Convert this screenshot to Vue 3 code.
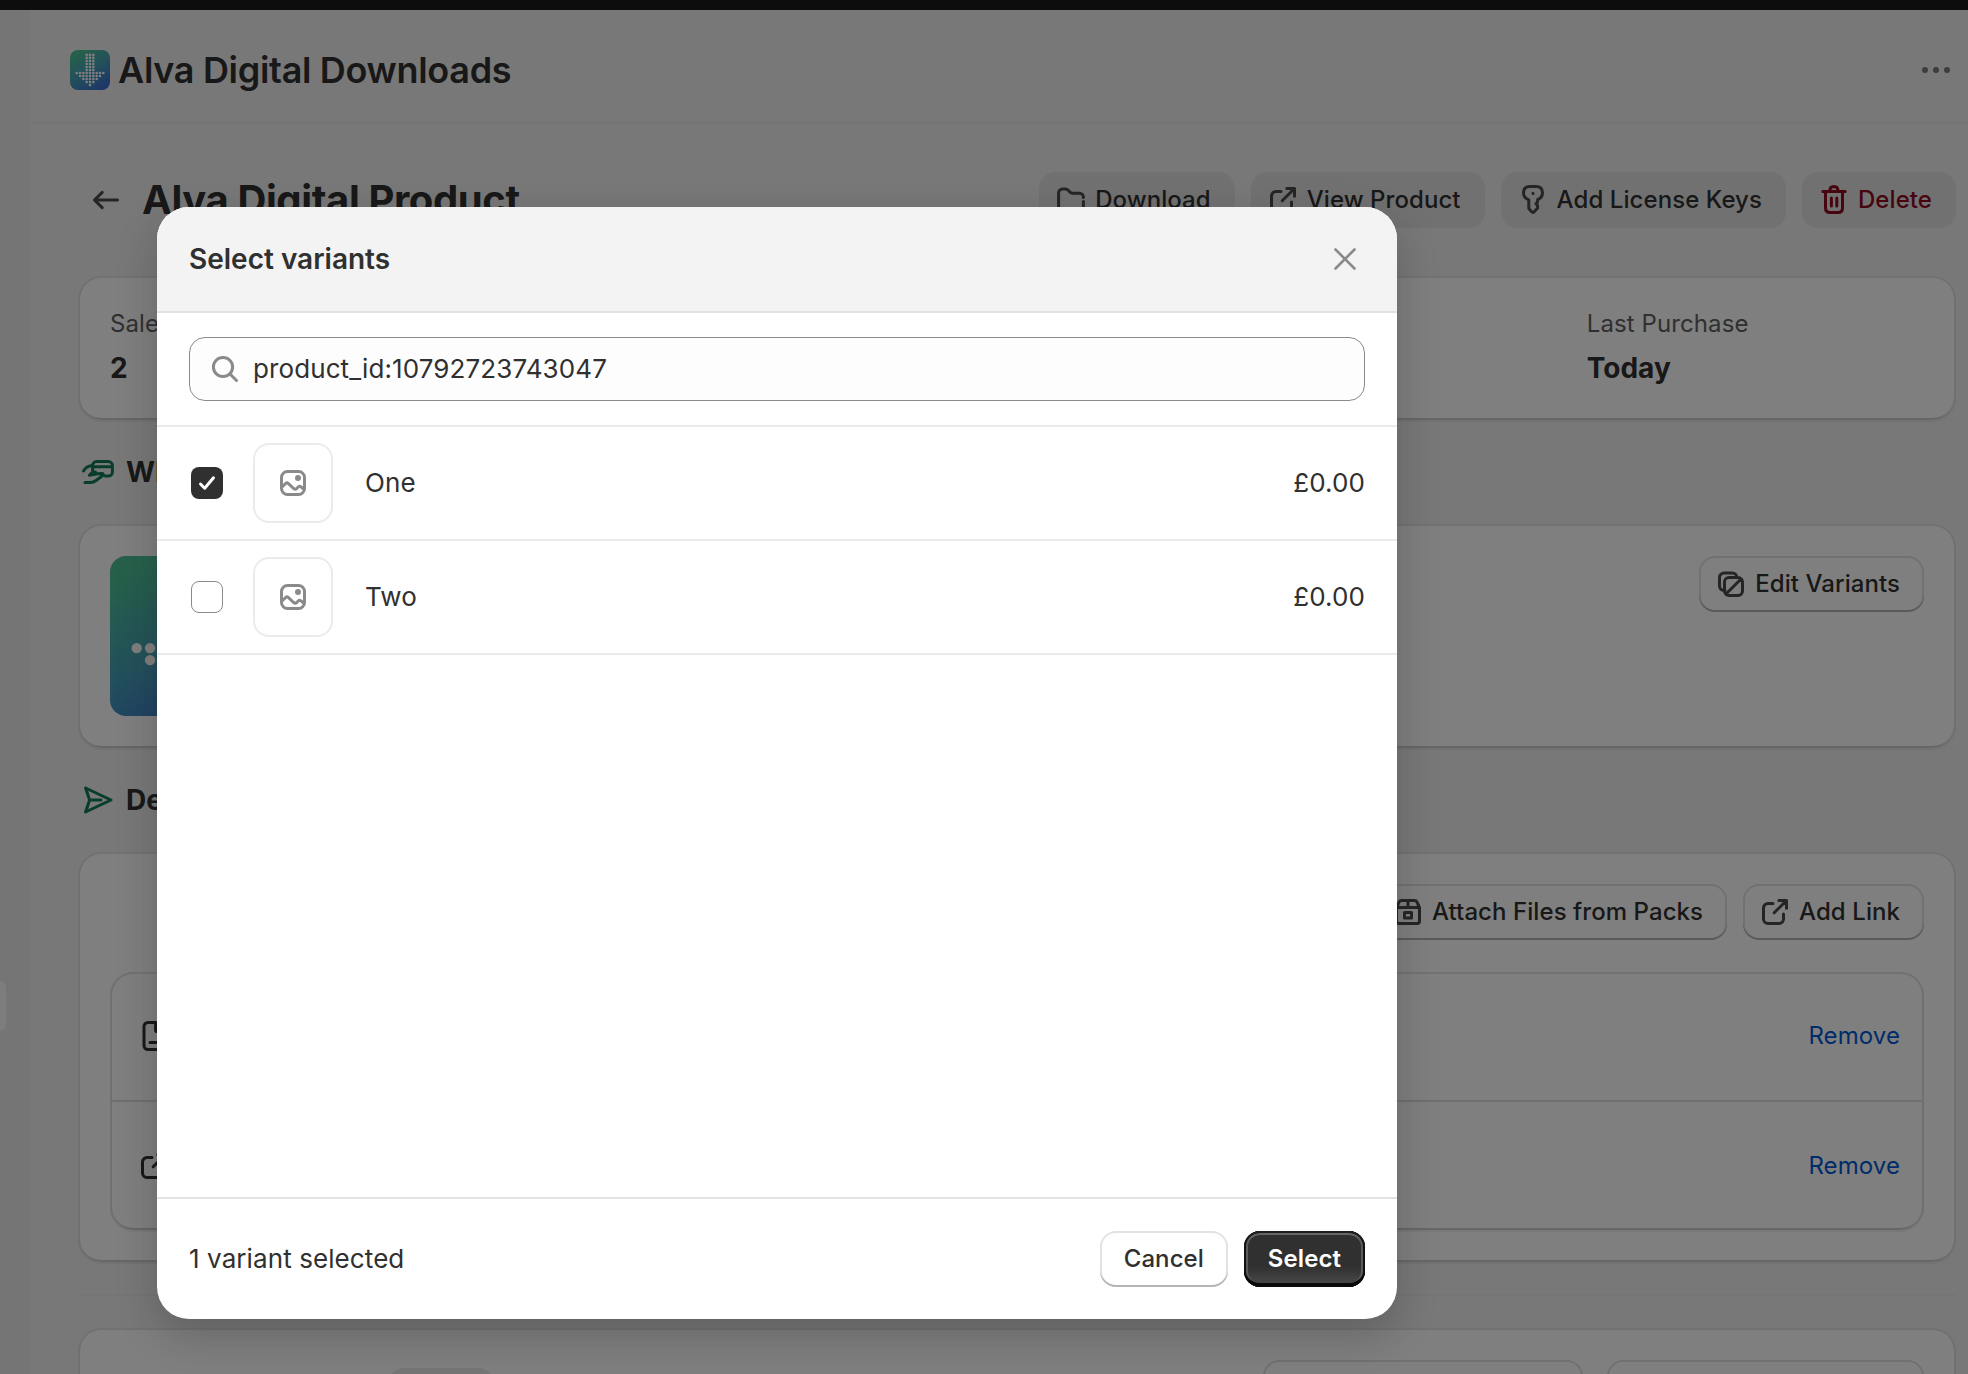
<template>
  <div class="app">
    <div class="topbar"></div>
    <div class="frame">
      <aside class="sidebar">
        <div class="nav-item"></div>
      </aside>
      <main class="main">
        <header class="app-header">
          <svg class="app-logo" viewBox="0 0 40 40">
            <defs>
              <linearGradient id="logoFill" x1="0.2" y1="0" x2="0.8" y2="1">
                <stop offset="0.05" stop-color="#4cc096" />
                <stop offset="0.5" stop-color="#46a0b8" />
                <stop offset="1" stop-color="#3a6ad0" />
              </linearGradient>
            </defs>
            <rect width="40" height="40" rx="8" fill="url(#logoFill)" />
            <circle v-for="(d, i) in dots" :key="i" :cx="d.x" :cy="d.y" r="1.3" fill="#fff" />
          </svg>
          <h1>Alva Digital Downloads</h1>
          <svg class="more" viewBox="0 0 28 6">
            <circle cx="3" cy="3" r="3" />
            <circle cx="14" cy="3" r="3" />
            <circle cx="25" cy="3" r="3" />
          </svg>
        </header>

        <div class="page">
          <div class="page-header">
            <svg class="icon back" viewBox="0 0 20 20"><path :d="icons.back" /></svg>
            <h2>Alva Digital Product</h2>
            <div class="page-actions">
              <button v-for="a in actions" :key="a.label" class="btn flat" :class="{ critical: a.critical }">
                <svg class="icon" viewBox="0 0 20 20"><path :d="a.icon" /></svg>
                <span>{{ a.label }}</span>
              </button>
            </div>
          </div>

          <section class="card stats">
            <div class="stat">
              <span>Sales</span>
              <strong>2</strong>
            </div>
            <div class="stat last">
              <span>Last Purchase</span>
              <strong>Today</strong>
            </div>
          </section>

          <h3 class="section-title">
            <svg class="icon" viewBox="0 0 20 20"><path :d="icons.payment" /></svg>
            What
          </h3>
          <section class="card product">
            <svg class="product-image" viewBox="0 0 40 40">
              <rect width="40" height="40" rx="4" fill="url(#logoFill)" />
              <circle v-for="(d, i) in dots" :key="i" :cx="d.x" :cy="d.y" r="1.3" fill="#fff" />
            </svg>
            <button class="btn">
              <svg class="icon" viewBox="0 0 20 20"><path :d="icons.variant" /></svg>
              <span>Edit Variants</span>
            </button>
          </section>

          <h3 class="section-title">
            <svg class="icon" viewBox="0 0 20 20"><path :d="icons.send" /></svg>
            Delivery
          </h3>
          <section class="card files">
            <div class="file-actions">
              <button class="btn">
                <svg class="icon" viewBox="0 0 20 20"><path :d="icons.pack" /></svg>
                <span>Attach Files from Packs</span>
              </button>
              <button class="btn">
                <svg class="icon" viewBox="0 0 20 20"><path :d="icons.external" /></svg>
                <span>Add Link</span>
              </button>
            </div>
            <div class="file-list">
              <div v-for="f in files" :key="f.id" class="file-row">
                <svg class="icon" viewBox="0 0 20 20"><path :d="f.icon" /></svg>
                <a href="#">Remove</a>
              </div>
            </div>
          </section>

          <hr />

          <section class="card bottom">
            <div class="badge"></div>
            <button class="btn wide"></button>
            <button class="btn wide"></button>
          </section>
        </div>
      </main>
    </div>

    <div class="backdrop">
      <div class="modal">
        <div class="modal-header">
          <h4>Select variants</h4>
          <svg class="close" viewBox="0 0 22 22"><path d="M1.5 1.5l19 19M20.5 1.5l-19 19" /></svg>
        </div>
        <div class="search-wrap">
          <div class="search">
            <svg viewBox="0 0 28 28"><circle cx="12" cy="12" r="9.6" /><path d="M19 19l6.5 6.5" /></svg>
            <input v-model="query" type="text" />
          </div>
        </div>
        <div class="variants">
          <div v-for="v in variants" :key="v.name" class="variant" @click="v.checked = !v.checked">
            <span class="checkbox" :class="{ checked: v.checked }">
              <svg v-if="v.checked" viewBox="0 0 32 32"><path d="M9.5 17l4.2 4.2 8.8-10.4" /></svg>
            </span>
            <span class="thumb">
              <svg viewBox="0 0 26 26">
                <rect x="1.5" y="1.5" width="23" height="23" rx="6" />
                <path d="M2 17l3.8-3.6q1.2-1 2.4 0l5.8 5.4q1.2.9 2.4 0l2-2q1.2-1 2.4 0l3.2 2.4" />
                <circle cx="18" cy="8" r="3" />
              </svg>
            </span>
            <span class="name">{{ v.name }}</span>
            <span class="price">{{ v.price }}</span>
          </div>
        </div>
        <div class="modal-footer">
          <span class="count">{{ selectedText }}</span>
          <button class="btn"><span>Cancel</span></button>
          <button class="btn primary"><span>Select</span></button>
        </div>
      </div>
    </div>
  </div>
</template>

<script setup>
import { ref, computed } from "vue"

const icons = {
  back: "M15.75 10H4.5M8.1 6.2L4.25 10l3.85 3.8",
  folder: "M16.2 10.8v2.7a2 2 0 0 1-2 2h-8.4a2 2 0 0 1-2-2v-7a2 2 0 0 1 2-2h1.4a2 2 0 0 1 1.5.7l.6.7a2 2 0 0 0 1.5.7h3.4a2 2 0 0 1 2 2v.2",
  external: "M9 5.75h-2.5a2.25 2.25 0 0 0-2.25 2.25v5.5a2.25 2.25 0 0 0 2.25 2.25h5.5a2.25 2.25 0 0 0 2.25-2.25v-2.5M11.9 4.25h3.85v3.85M15.5 4.5l-5.9 5.9",
  key: "M10 6.6v.1M7.9 9.9v4.4l1.4 1.6q.6.6 1.3 0l1.7-1.9v-1.2l-.8-.9.8-.9v-1.2q2.45-.9 2.45-3.4 0-3.15-3.2-3.15h-3.1q-3.2 0-3.2 3.15 0 2.6 2.65 3.5z",
  trash: "M4.4 5.75h11.2M7.9 5.5q0-2.2 2.05-2.25 2.05.05 2.05 2.25M5.75 6v8q0 2.25 2.25 2.25h4q2.25 0 2.25-2.25v-8M8.7 9v4M11.4 9v4",
  payment: "M7.3 9.6v-2.8a2 2 0 0 1 2-2h5.9a2 2 0 0 1 2 2v3.2a2 2 0 0 1-2 2h-1.6M7.5 7.4h9.6M2.75 9.5q1.4-2.4 4.3-2.7M3.5 15.25h2.7q1.5 0 2.8-1l3.4-2.5q.7-.8-.4-1l-2.2.1-4.1.8q.9-1.5 3-1.7",
  send: "M3.8 4l12.7 6-12.7 6 2-6zM6 10h5.5",
  variant: "M7 13.2h-.5a2.25 2.25 0 0 1-2.25-2.25v-4.2a2.25 2.25 0 0 1 2.25-2.25h4.2a2.25 2.25 0 0 1 2.25 2.2M9 6.75h4.5a2.25 2.25 0 0 1 2.25 2.25v4.5a2.25 2.25 0 0 1-2.25 2.25h-4.5a2.25 2.25 0 0 1-2.25-2.25v-4.5a2.25 2.25 0 0 1 2.25-2.25zM7.5 15l7.5-7.5",
  pack: "M4.25 7.75v6.75q0 1.25 1.25 1.25h9q1.25 0 1.25-1.25v-6.75l-1.3-2.75q-.3-.75-1.2-.75h-6.5q-.9 0-1.2.75zM4.25 7.75h11.5M10 4.5v3.25M8.25 10.25h3.5v2.75h-3.5z",
  file: "M11 3.25h-4a2 2 0 0 0-2 2v9.5a2 2 0 0 0 2 2h6a2 2 0 0 0 2-2v-7.5zM10.8 3.5v3.5q0 .8.8.8h3.2M8 13.3h4"
}

const actions = [
  { label: "Download", icon: icons.folder },
  { label: "View Product", icon: icons.external },
  { label: "Add License Keys", icon: icons.key },
  { label: "Delete", icon: icons.trash, critical: true }
]

const files = [
  { id: 1, icon: icons.file },
  { id: 2, icon: icons.external }
]

// dot-matrix arrow: number of dots per row, top to bottom
const rows = [3, 3, 3, 3, 3, 3, 9, 7, 5, 3, 1]
const dots = rows.flatMap((n, r) =>
  Array.from({ length: n }, (_, c) => ({
    x: 20 + (c - (n - 1) / 2) * 3.33,
    y: 4.9 + r * 3.02
  }))
)

const query = ref("product_id:10792723743047")
const variants = ref([
  { name: "One", price: "£0.00", checked: true },
  { name: "Two", price: "£0.00", checked: false }
])

const selectedText = computed(() => {
  const n = variants.value.filter((v) => v.checked).length
  return `${n} variant${n === 1 ? "" : "s"} selected`
})
</script>

<style>
body {
  margin: 0;
  overflow: hidden;
}
</style>

<style scoped>
.app {
  height: 1374px;
  overflow: hidden;
  background: #1a1a1a;
  color: #303030;
  font-family: Inter, sans-serif;
  font-size: 26px;
  letter-spacing: 0.09px;
}

.app * {
  box-sizing: border-box;
}

h1,
h2,
h3,
h4 {
  margin: 0;
}

.topbar {
  height: 10px;
}

.frame {
  display: flex;
  height: 1364px;
}

.sidebar {
  width: 30px;
  background: #ebebeb;
  padding-top: 971px;
}

.nav-item {
  width: 6px;
  height: 50px;
  background: #fafafa;
  border-radius: 0 16px 16px 0;
}

.main {
  flex: 1;
  background: #f1f1f1;
  overflow: hidden;
}

.app-header {
  display: flex;
  align-items: center;
  height: 114px;
  padding: 8px 18px 0 40px;
  border-bottom: 2px solid #ebebeb;
}

.app-logo {
  width: 40px;
  height: 40px;
}

.app-header h1 {
  flex: 1;
  margin-left: 8px;
  font-size: 36px;
  font-weight: 600;
  letter-spacing: -0.31px;
  line-height: 48px;
}

.more {
  width: 28px;
  height: 6px;
  fill: #7a7a7a;
}

.page {
  padding: 48px 12px 0 48px;
}

.page-header {
  display: flex;
  align-items: center;
  height: 56px;
  margin-bottom: 48px;
}

.page-header h2 {
  flex: 1;
  margin-left: 16px;
  padding-bottom: 2px;
  font-size: 40px;
  font-weight: 700;
  letter-spacing: -0.4px;
}

.icon {
  width: 40px;
  height: 40px;
  flex: none;
  fill: none;
  stroke: #4a4a4a;
  stroke-width: 1.5;
  stroke-linecap: round;
  stroke-linejoin: round;
}

.back {
  margin-left: 8px;
}

.page-actions {
  display: flex;
  gap: 16px;
}

.btn {
  display: flex;
  align-items: center;
  gap: 4px;
  height: 56px;
  padding: 0 24px 0 12px;
  border: none;
  border-radius: 16px;
  background: #fff;
  color: #303030;
  font-family: inherit;
  font-size: 24px;
  font-weight: 550;
  letter-spacing: 0.07px;
  white-space: nowrap;
  box-shadow: inset 0 -2px 0 #b5b5b5, inset 0 0 0 2px #e3e3e3;
}

.btn span {
  padding-bottom: 2px;
}

.btn.flat {
  background: #e3e3e3;
  box-shadow: none;
}

.btn.critical {
  color: #8e0b21;
}

.btn.critical .icon {
  stroke: #8e0b21;
}

.card {
  background: #fff;
  border-radius: 24px;
  padding: 32px;
  box-shadow: 0 2px 0 #e5e5e5, inset 2px 0 0 #e0e0e0, inset -2px 0 0 #e0e0e0,
    inset 0 -2px 0 #cfcfcf, inset 0 2px 0 #e5e5e5;
}

.stats {
  display: grid;
  grid-template-columns: repeat(5, 1fr);
  gap: 32px;
  height: 144px;
}

.stat {
  display: flex;
  flex-direction: column;
  gap: 8px;
}

.stat.last {
  grid-column: 5;
}

.stat span {
  color: #616161;
  font-size: 24px;
  line-height: 32px;
}

.stat strong {
  font-size: 28px;
  font-weight: 700;
  letter-spacing: 0;
  line-height: 40px;
}

.section-title {
  display: flex;
  align-items: center;
  gap: 8px;
  height: 40px;
  margin: 32px 0;
  font-size: 28px;
  font-weight: 650;
  letter-spacing: 0;
}

.section-title .icon {
  stroke: #0e7a52;
}

.product {
  display: flex;
  justify-content: space-between;
  align-items: flex-start;
  height: 224px;
}

.product-image {
  width: 160px;
  height: 160px;
}

.files {
  height: 410px;
}

.file-actions {
  display: flex;
  justify-content: flex-end;
  gap: 16px;
  margin-bottom: 32px;
}

.file-list {
  border-radius: 24px;
  box-shadow: 0 2px 0 #f0f0f0, inset 2px 0 0 #e0e0e0, inset -2px 0 0 #e0e0e0,
    inset 0 -2px 0 #cfcfcf, inset 0 2px 0 #e5e5e5;
}

.file-row {
  display: flex;
  justify-content: space-between;
  align-items: center;
  height: 128px;
  padding: 0 24px;
}

.file-row + .file-row {
  height: 130px;
  border-top: 2px solid #dedede;
}

.file-row .icon {
  stroke: #303030;
}

.file-row a {
  padding-bottom: 2px;
  color: #005bd3;
  font-size: 24px;
  text-decoration: none;
}

hr {
  height: 2px;
  margin: 32px 0;
  border: none;
  background: #ebebeb;
}

.bottom {
  display: flex;
  gap: 24px;
  height: 200px;
}

.badge {
  width: 106px;
  height: 40px;
  margin: 8px auto 0 278px;
  border-radius: 16px;
  background: #ebebeb;
}

.btn.wide {
  width: 317px;
}

.btn.wide:nth-child(2) {
  width: 320px;
}

/* dimmed layer with the dialog on top */
.backdrop {
  position: absolute;
  inset: 0;
  padding: 207px 0 0 157px;
  background: rgba(0, 0, 0, 0.5);
}

.modal {
  display: flex;
  flex-direction: column;
  width: 1240px;
  height: 1112px;
  overflow: hidden;
  border-radius: 32px;
  background: #fff;
  box-shadow: 0 16px 40px rgba(26, 26, 26, 0.24);
}

.modal-header {
  display: flex;
  align-items: center;
  justify-content: space-between;
  height: 106px;
  padding: 0 41px 0 32px;
  background: #f3f3f3;
  border-bottom: 2px solid #e3e3e3;
}

.modal-header h4 {
  font-size: 28px;
  font-weight: 600;
  letter-spacing: 0;
}

.close {
  width: 22px;
  height: 22px;
  fill: none;
  stroke: #8a8a8a;
  stroke-width: 2.6;
  stroke-linecap: round;
}

.search-wrap {
  padding: 24px 32px;
  border-bottom: 2px solid #ebebeb;
}

.search {
  display: flex;
  align-items: center;
  height: 64px;
  padding: 0 21px;
  border: 1px solid #8a8a8a;
  border-radius: 16px;
  background: #fdfdfd;
}

.search svg {
  width: 28px;
  height: 28px;
  fill: none;
  stroke: #8a8a8a;
  stroke-width: 3;
  stroke-linecap: round;
}

.search input {
  flex: 1;
  margin-left: 14px;
  padding: 0 0 2px;
  border: none;
  outline: none;
  background: transparent;
  color: #303030;
  font-family: inherit;
  font-size: 26px;
  letter-spacing: 0.1px;
}

.variants {
  flex: 1;
}

.variant {
  display: flex;
  align-items: center;
  height: 114px;
  padding: 0 32px 0 34px;
  border-bottom: 2px solid #ebebeb;
}

.checkbox {
  width: 32px;
  height: 32px;
  border: 1px solid #8a8a8a;
  border-radius: 8px;
}

.checkbox.checked {
  border: none;
  background: #303030;
}

.checkbox svg {
  display: block;
  fill: none;
  stroke: #fff;
  stroke-width: 3;
  stroke-linecap: round;
  stroke-linejoin: round;
}

.thumb {
  display: flex;
  align-items: center;
  justify-content: center;
  width: 80px;
  height: 80px;
  margin: 0 32px 0 30px;
  border: 2px solid #ebebeb;
  border-radius: 16px;
}

.thumb svg {
  width: 26px;
  height: 26px;
  fill: none;
  stroke: #8a8a8a;
  stroke-width: 3;
}

.thumb circle {
  fill: #8a8a8a;
  stroke: none;
}

.name {
  flex: 1;
  padding-bottom: 2px;
}

.price {
  padding-bottom: 2px;
}

.modal-footer {
  display: flex;
  align-items: center;
  gap: 16px;
  height: 122px;
  padding: 0 32px;
  border-top: 2px solid #e3e3e3;
}

.count {
  flex: 1;
  padding-bottom: 2px;
}

.modal-footer .btn {
  padding: 0 24px;
}

.modal-footer .btn.primary {
  background: linear-gradient(#303030 63%, #4d4d4d);
  color: #fff;
  font-weight: 600;
  box-shadow: inset 0 2px 0 #1f1f1f, inset 0 -4px 0 #0a0a0a, inset 0 0 0 2px #121212,
    inset 0 4px 0 #666, inset 0 0 0 4px #5a5a5a;
}
</style>
